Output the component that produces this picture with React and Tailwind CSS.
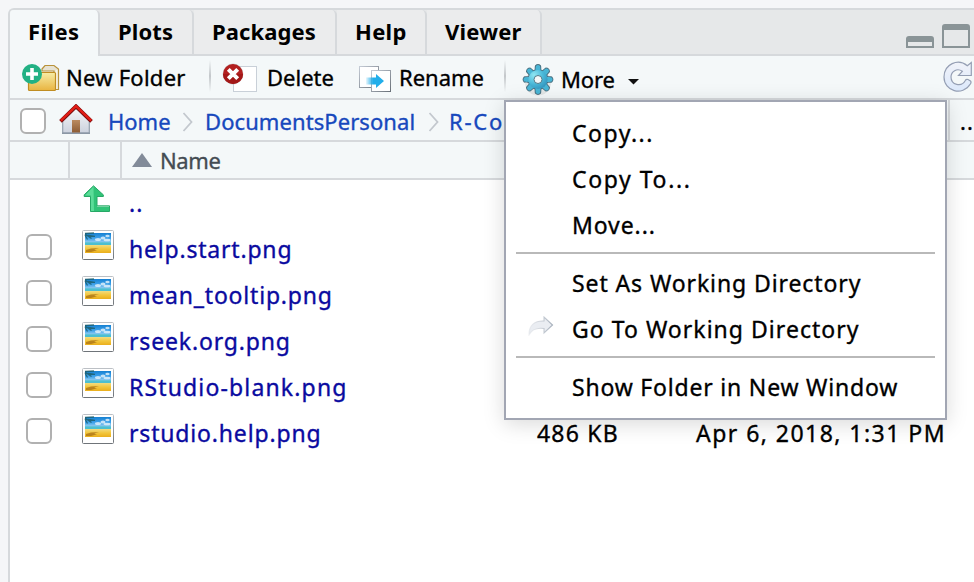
import React from "react";

function Label({ children, className = "" }) {
  return <span className={"block shrink-0 whitespace-nowrap " + className}>{children}</span>;
}

function NewFolderIcon() {
  return (
    <svg className="block shrink-0" width="40" height="32" viewBox="0 0 40 32">
      <defs>
        <linearGradient id="folder" x1="0" y1="0" x2="0" y2="1">
          <stop offset="0" stopColor="#f6eda6" />
          <stop offset="1" stopColor="#e9b440" />
        </linearGradient>
      </defs>
      <path d="M20 8 L23 4.5 H32 L36.500 8 V28.500 H32 V10 H20 Z" fill="#e6e2d2" stroke="#b8923a" strokeWidth="1.2" />
      <path d="M34.500 9 V28" stroke="#fbf7e6" strokeWidth="1.8" />
      <rect x="6.500" y="11.5" width="27" height="18" rx="1" fill="url(#folder)" stroke="#c08d22" strokeWidth="1.2" />
      <circle cx="10" cy="13" r="10" fill="#22b184" />
      <path d="M10 7 V19 M4 13 H16" stroke="#fff" strokeWidth="3.6" />
    </svg>
  );
}

function DeleteIcon() {
  return (
    <svg className="block shrink-0" width="36" height="32" viewBox="0 0 36 32">
      <rect x="11.5" y="5.5" width="23" height="25" fill="#fff" stroke="#c9d0d8" />
      <circle cx="11" cy="13" r="10.4" fill="#9aa0a0" opacity=".45" />
      <circle cx="11" cy="13" r="10" fill="#b32020" />
      <path d="M1 13 a10 10 0 0 0 20 0 z" fill="#a31818" />
      <path d="M6.300 8.300 L15.700 17.700 M15.700 8.300 L6.300 17.700" stroke="#fff" strokeWidth="4" />
    </svg>
  );
}

function RenameIcon() {
  return (
    <svg className="block shrink-0" width="34" height="28" viewBox="0 0 34 28">
      <defs>
        <linearGradient id="page" x1="0" y1="0" x2="1" y2="1">
          <stop offset="0" stopColor="#c5ccd6" />
          <stop offset="1" stopColor="#697078" />
        </linearGradient>
        <linearGradient id="arrow" x1="0" y1="0" x2="1" y2="0">
          <stop offset="0" stopColor="#22aeea" stopOpacity=".1" />
          <stop offset=".4" stopColor="#22aeea" />
        </linearGradient>
      </defs>
      <rect x=".5" y=".5" width="19" height="21" fill="#fff" stroke="url(#page)" />
      <rect x="12.500" y="4.500" width="19" height="21" fill="#fff" stroke="url(#page)" />
      <path d="M7 11.500 H17 V8 L25 15 L17 22 V18.500 H7 Z" fill="url(#arrow)" />
    </svg>
  );
}

const teeth = [0, 45, 90, 135, 180, 225, 270, 315];

function GearIcon() {
  return (
    <svg className="block shrink-0" width="32" height="34" viewBox="0 0 32 34">
      <defs>
        <radialGradient id="gear" gradientUnits="userSpaceOnUse" cx="12" cy="12" r="18">
          <stop offset="0" stopColor="#8fe6f2" />
          <stop offset=".5" stopColor="#4ab8d8" />
          <stop offset="1" stopColor="#2c88b4" />
        </radialGradient>
      </defs>
      <ellipse cx="16" cy="19.500" rx="13" ry="13" fill="#777" opacity=".14" />
      <g fill="#4a7080">
        {teeth.map((a) => (
          <path key={a} transform={`rotate(${a} 16 16.500)`} d="M11 9 C13.500 7 12.300 5 13 2.500 Q16 -.3 19 2.500 C19.700 5 18.500 7 21 9 Z" />
        ))}
        <circle cx="16" cy="16.500" r="10.300" />
      </g>
      <g fill="#48b5d5">
        {teeth.map((a) => (
          <path key={a} transform={`rotate(${a} 16 16.500)`} d="M12 10 C14.300 7 13.200 5 14 3 Q16 1 18 3 C18.800 5 17.700 7 20 10 Z" />
        ))}
      </g>
      <circle cx="16" cy="16.500" r="9.600" fill="url(#gear)" />
      <circle cx="16" cy="16.500" r="4" fill="#f4f8f9" stroke="#527b8a" />
    </svg>
  );
}

function RefreshIcon() {
  return (
    <svg className="block shrink-0" width="31" height="32" viewBox="0 0 31 32">
      <defs>
        <linearGradient id="refresh" x1="0" y1="0" x2="0" y2="1">
          <stop offset="0" stopColor="#f1f3f9" />
          <stop offset="1" stopColor="#dbe8fb" />
        </linearGradient>
      </defs>
      <path
        d="M24.300 4.700 L28.300 1.500 V14.500 H15.500 L19.300 10.300 C14 6.500 8 10.500 8 16 C8 24 18.500 26.500 22.300 19.500 Q23 18 25 18.500 L27.500 20 Q28.500 21 27.500 22.800 C19.500 36 1 30 1 16 C1 3 15 -3 24.300 4.700 Z"
        fill="url(#refresh)" stroke="#959fb4" strokeWidth="1.200"
      />
    </svg>
  );
}

function HomeIcon() {
  return (
    <svg className="block shrink-0" width="34" height="32" viewBox="0 0 34 32">
      <defs>
        <linearGradient id="wall" x1="0" y1="0" x2="0" y2="1">
          <stop offset="0" stopColor="#f6f6f8" />
          <stop offset="1" stopColor="#ccd2de" />
        </linearGradient>
        <linearGradient id="door" x1="0" y1="0" x2="0" y2="1">
          <stop offset="0" stopColor="#bb8b60" />
          <stop offset="1" stopColor="#8d5c35" />
        </linearGradient>
      </defs>
      <path d="M3.700 17 L17 4 L30.300 17 V29 H3.700 Z" fill="url(#wall)" stroke="#95a0ad" strokeWidth="1.200" />
      <path d="M3 29.200 H31" stroke="#8b97a5" strokeWidth="1.500" />
      <rect x="13" y="16" width="8" height="12.500" fill="url(#door)" />
      <path d="M1.500 17.300 L17 2.300 L32.500 17.300" fill="none" stroke="#7d0c0c" strokeWidth="3.800" />
      <path d="M1.800 16.700 L17 2.100 L32.200 16.700" fill="none" stroke="#e21d16" strokeWidth="2.300" />
    </svg>
  );
}

function Chevron() {
  return (
    <svg className="block shrink-0" width="12" height="20" viewBox="0 0 12 20">
      <path d="M1.500 1 L9.500 10 L1.500 19" fill="none" stroke="#c3c8ce" strokeWidth="1.800" />
    </svg>
  );
}

function UpIcon() {
  return (
    <svg className="block" width="28" height="28" viewBox="0 0 28 28">
      <path d="M10.500 1 L20.500 10 V11.500 H14 V21.500 H26.500 V26.500 H7.500 V11.500 H1 V10 Z" fill="#30c377" />
      <path d="M10.500 1.500 L2 10.500 H8 V26 H11 Z" fill="#5bdc98" />
      <path d="M10.500 .800 L20.300 9.800 V11.500 H14 V20.800 H26.500 V26.500 H7.500 V11.500 H1.200 V9.800 Z" fill="none" stroke="#27a866" />
    </svg>
  );
}

function PictureIcon() {
  return (
    <svg className="block" width="32" height="30" viewBox="0 0 32 30">
      <defs>
        <linearGradient id="sky" x1="0" y1="0" x2="0" y2="1">
          <stop offset="0" stopColor="#1580d2" />
          <stop offset=".5" stopColor="#3fa2ea" />
          <stop offset="1" stopColor="#b5dff5" />
        </linearGradient>
        <linearGradient id="sand" x1="0" y1="0" x2="0" y2="1">
          <stop offset="0" stopColor="#f2dc80" />
          <stop offset=".5" stopColor="#f2c63c" />
          <stop offset="1" stopColor="#eaae1c" />
        </linearGradient>
        <linearGradient id="photo" x1="0" y1="0" x2="0" y2="1">
          <stop offset="0" stopColor="#bcc0c5" />
          <stop offset="1" stopColor="#6f7479" />
        </linearGradient>
      </defs>
      <rect x=".5" y=".5" width="31" height="29" rx="1" fill="#fff" stroke="url(#photo)" />
      <rect x="3" y="3" width="26" height="11" fill="url(#sky)" />
      <g fill="#e6f3fb" opacity=".8">
        <ellipse cx="16" cy="9.500" rx="3" ry="1.500" />
        <ellipse cx="21" cy="8" rx="2.500" ry="1.600" />
        <ellipse cx="25.500" cy="6" rx="2.200" ry="1.300" />
        <ellipse cx="25" cy="10" rx="3.500" ry="1.300" />
      </g>
      <rect x="3" y="12.300" width="26" height="3" fill="#4dbfd0" />
      <path d="M3 3.300 L12 3 M3 5 L13 6.300 M3 4 L9.500 8.500 M3 5 L5.500 9.500" stroke="#1d5c66" strokeWidth="1.300" opacity=".8" />
      <rect x="3" y="15" width="26" height="8" fill="url(#sand)" />
      <path d="M4 20 L9 18.500 L17 18 L12 19.500 L15 20.300 L9 22 H4 Z" fill="#a87014" opacity=".75" />
    </svg>
  );
}

function GoIcon() {
  return (
    <svg className="block shrink-0" width="26" height="20" viewBox="0 0 26 20">
      <defs>
        <linearGradient id="go" x1="0" y1="0" x2="1" y2="0">
          <stop offset="0" stopColor="#dfe2e7" stopOpacity=".5" />
          <stop offset="1" stopColor="#a3adb9" />
        </linearGradient>
      </defs>
      <path d="M1 19 C.5 9 7 4.500 16 5 V1 L24.500 9 L16 17 V12.500 C9 11.500 4 13 1 19 Z" fill="#eaedf2" stroke="url(#go)" strokeWidth="1.100" />
    </svg>
  );
}

const checkbox = "block size-[26px] shrink-0 rounded-[6px] border-2 border-[#b1b1b1] bg-white";

const tabs = [
  { name: "Files", box: "w-[90px] bg-[#f4f8f9] pl-[18px] h-[46px]", text: "tracking-[0.4px]" },
  { name: "Plots", box: "w-[94px] bg-[#ebeced] pl-[18px] h-[44px]", text: "tracking-[0.1px]" },
  { name: "Packages", box: "w-[143px] bg-[#ebeced] pl-[18px] h-[44px]", text: "tracking-[0.1px]" },
  { name: "Help", box: "w-[90px] bg-[#ebeced] pl-[18px] h-[44px]", text: "tracking-[0.3px]" },
  { name: "Viewer", box: "w-[115px] bg-[#ebeced] pl-[18px] h-[44px]", text: "tracking-[0.2px]" },
];

const files = [
  { name: "help.start.png", text: "tracking-[0.8px]" },
  { name: "mean_tooltip.png", text: "tracking-[0.8px]" },
  { name: "rseek.org.png", text: "tracking-[0.83px]" },
  { name: "RStudio-blank.png", text: "tracking-[1.15px]" },
  { name: "rstudio.help.png", text: "tracking-[0.83px]", size: "486 KB", date: "Apr 6, 2018, 1:31 PM" },
];

function MenuItem({ children, icon, className }) {
  return (
    <div className="flex h-[46px] items-center pb-[2px]">
      <div className="w-[66px] pb-[6px] pl-[22px]">{icon}</div>
      <Label className={className}>{children}</Label>
    </div>
  );
}

function Divider() {
  return <div className="mt-[3px] mr-[10px] mb-[7px] ml-[10px] h-[2px] bg-[#b9b9b9]" />;
}

export default function App() {
  return (
    <div className="relative h-[582px] w-[974px] overflow-hidden bg-[#f5f6f8] pt-2 pl-2 font-['Noto_Sans','Open_Sans',sans-serif] text-[22px] leading-[32px] text-black [-webkit-text-stroke:0.35px]">
      <div className="h-[574px] w-[966px] overflow-hidden rounded-tl-[6px] border-t-2 border-l-2 border-[#d6d9dc] bg-white">
        <div className="flex h-[46px] border-b-2 border-[#d6d9dc] bg-[#e6e8e9]">
          {tabs.map((t) => (
            <div key={t.name} className={"shrink-0 rounded-tr-[5px] border-r-2 border-[#d6d9dc] pt-[5px] font-bold [-webkit-text-stroke:0px] " + t.box}>
              <Label className={t.text}>{t.name}</Label>
            </div>
          ))}
          <div className="ml-auto flex items-end gap-2 pr-1 pb-[6px]">
            <div className="h-3 w-7 rounded-t-[3px] border-2 border-t-[6px] border-[#8a9497]" />
            <div className="h-6 w-7 rounded-t-[3px] border-2 border-t-[6px] border-[#8a9497]" />
          </div>
        </div>

        <div className="flex h-[44px] items-start border-b-2 border-[#d6d9dc] bg-[#f4f8f9] pl-[12px]">
          <div className="mt-[5px]"><NewFolderIcon /></div>
          <Label className="mt-[5px] ml-[4px] w-[143px] tracking-[0.25px]">New Folder</Label>
          <div className="mt-[4px] h-8 w-[2px] bg-gradient-to-b from-transparent via-[#c3c7ca] to-transparent" />
          <div className="mt-[5px] ml-[11px]"><DeleteIcon /></div>
          <Label className="mt-[5px] ml-[9px] w-[92px]">Delete</Label>
          <div className="mt-[10px]"><RenameIcon /></div>
          <Label className="mt-[5px] ml-[6px] w-[105px]">Rename</Label>
          <div className="mt-[4px] h-8 w-[2px] bg-gradient-to-b from-transparent via-[#c3c7ca] to-transparent" />
          <div className="mt-[7px] ml-[16px]"><GearIcon /></div>
          <Label className="mt-[7px] ml-[7px] w-[67px] tracking-[-0.1px]">More</Label>
          <svg className="mt-[23px] block" width="11" height="6" viewBox="0 0 11 6">
            <path d="M0 0 H11 L5.500 5.500 Z" fill="#111" />
          </svg>
          <div className="mt-[5px] ml-auto"><RefreshIcon /></div>
        </div>

        <div className="flex h-[42px] items-start border-b-2 border-[#d6d9dc] bg-[#f4f8f9] pl-[10px] text-[#1748bd]">
          <span className={checkbox + " mt-2"} />
          <div className="mt-[4px] ml-[13px]"><HomeIcon /></div>
          <Label className="mt-[5px] ml-[15px] w-[74px]">Home</Label>
          <div className="mt-[12px]"><Chevron /></div>
          <Label className="mt-[5px] ml-[11px] w-[223px] tracking-[0.08px]">DocumentsPersonal</Label>
          <div className="mt-[12px]"><Chevron /></div>
          <Label className="mt-[5px] ml-[9px] tracking-[1.8px]">R-Co</Label>
          <div className="ml-auto h-10 w-[26px] border-l-2 border-[#d6d9dc] pt-[5px] pl-[10px] text-black">
            <Label className="tracking-[1px]">..</Label>
          </div>
        </div>

        <div className="flex h-[38px] border-b-2 border-[#d6d9dc] bg-[#f4f8f9] text-[#444c53]">
          <div className="w-[60px] border-r-2 border-[#d6d9dc]" />
          <div className="w-[52px] border-r-2 border-[#d6d9dc]" />
          <svg className="mt-[11px] ml-[10px] block" width="20" height="14" viewBox="0 0 20 14">
            <path d="M10 0 L20 14 H0 Z" fill="#828b99" />
          </svg>
          <Label className="mt-[2px] ml-[8px] tracking-[-0.4px]">Name</Label>
        </div>

        <div className="flex h-[44px] items-start pl-[73px] text-[23px] text-[#0a0aa0]">
          <div className="mt-[5px]"><UpIcon /></div>
          <Label className="mt-[7px] ml-[18px] tracking-[1px]">..</Label>
        </div>
        {files.map((f) => (
          <div key={f.name} className="flex h-[46px] items-start pl-4 text-[23px]">
            <span className={checkbox + " mt-[10px]"} />
            <div className="mt-[6px] ml-[30px]"><PictureIcon /></div>
            <Label className={"mt-[9px] ml-[15px] text-[#0a0aa0] " + f.text}>{f.name}</Label>
            {f.size && (
              <div className="mt-[9px] mr-[28px] ml-auto flex">
                <Label className="w-[159px] tracking-[1.2px]">{f.size}</Label>
                <Label className="w-[250px] tracking-[1.46px]">{f.date}</Label>
              </div>
            )}
          </div>
        ))}
      </div>

      <div className="absolute top-[100px] left-[504px] h-[320px] w-[443px] border-2 border-[#a2a6b3] bg-white pt-[9px] text-[23px] shadow-[0_4px_20px_rgba(0,0,0,0.15)]">
        <MenuItem className="tracking-[1.5px]">Copy...</MenuItem>
        <MenuItem className="tracking-[1.6px]">Copy To...</MenuItem>
        <MenuItem className="tracking-[0.9px]">Move...</MenuItem>
        <Divider />
        <MenuItem className="tracking-[0.9px]">Set As Working Directory</MenuItem>
        <MenuItem className="tracking-[1.03px]" icon={<GoIcon />}>Go To Working Directory</MenuItem>
        <Divider />
        <MenuItem className="tracking-[0.8px]">Show Folder in New Window</MenuItem>
      </div>
    </div>
  );
}
